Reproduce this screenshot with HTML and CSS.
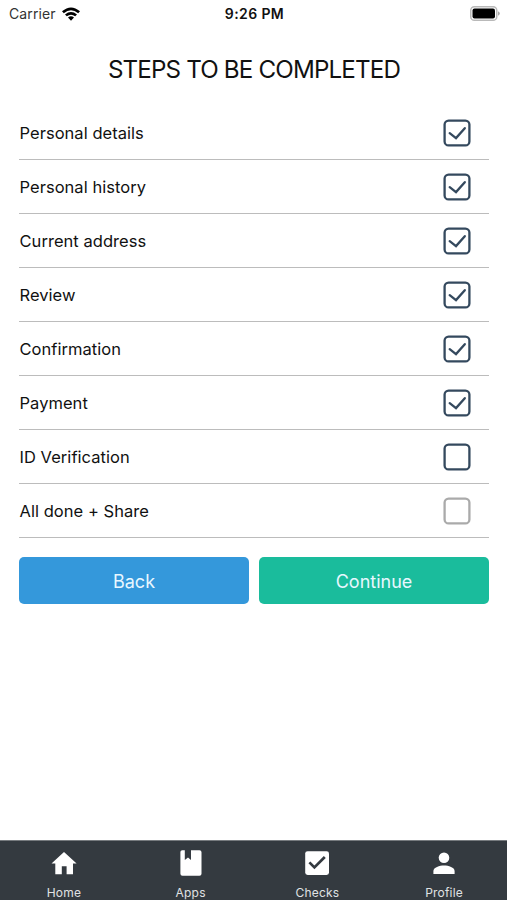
FILE: index.html
```html
<!DOCTYPE html>
<html lang="en">
<head>
<meta charset="utf-8">
<title>Steps to be completed</title>
<link rel="stylesheet" href="styles.css">
</head>
<body>
<div class="screen">
  <header class="status">
    <div class="carrier"><span>Carrier</span>
      <svg class="wifi" viewBox="0 0 18 14"><path d="M0 4.3Q9-3.5 18 4.3L16.2 6.3Q9 .2 1.8 6.3Z M3 7.4Q9 2.5 15 7.4L13.2 9.3Q9 6 4.8 9.3Z M6 10.4Q9 8 12 10.4L9 13.7Z"/></svg>
    </div>
    <span class="time">9:26 PM</span>
    <svg class="battery" viewBox="0 0 30 15"><rect x=".75" y=".75" width="26" height="13.5" rx="3.6" fill="#fff" stroke="#b9b9b9" stroke-width="1.5"/><rect x="2.5" y="2.5" width="22.5" height="10" rx="2" fill="#000"/><path d="M28 5.2q1.8.8 1.8 2.3T28 9.8z" fill="#aaa"/></svg>
  </header>
  <main>
    <h1><span>STEPS TO BE COMPLETED</span></h1>
    <ul class="steps">
      <li><span>Personal details</span><svg class="box" viewBox="0 0 28 28"><rect x="1.6" y="1.6" width="24.8" height="24.8" rx="4"/><path d="M6.7 14.2L13 19.1 21.8 9.2"/></svg></li>
      <li><span>Personal history</span><svg class="box" viewBox="0 0 28 28"><rect x="1.6" y="1.6" width="24.8" height="24.8" rx="4"/><path d="M6.7 14.2L13 19.1 21.8 9.2"/></svg></li>
      <li><span>Current address</span><svg class="box" viewBox="0 0 28 28"><rect x="1.6" y="1.6" width="24.8" height="24.8" rx="4"/><path d="M6.7 14.2L13 19.1 21.8 9.2"/></svg></li>
      <li><span>Review</span><svg class="box" viewBox="0 0 28 28"><rect x="1.6" y="1.6" width="24.8" height="24.8" rx="4"/><path d="M6.7 14.2L13 19.1 21.8 9.2"/></svg></li>
      <li><span>Confirmation</span><svg class="box" viewBox="0 0 28 28"><rect x="1.6" y="1.6" width="24.8" height="24.8" rx="4"/><path d="M6.7 14.2L13 19.1 21.8 9.2"/></svg></li>
      <li><span>Payment</span><svg class="box" viewBox="0 0 28 28"><rect x="1.6" y="1.6" width="24.8" height="24.8" rx="4"/><path d="M6.7 14.2L13 19.1 21.8 9.2"/></svg></li>
      <li><span>ID Verification</span><svg class="box" viewBox="0 0 28 28"><rect x="1.6" y="1.6" width="24.8" height="24.8" rx="4"/></svg></li>
      <li><span>All done + Share</span><svg class="box pending" viewBox="0 0 28 28"><rect x="1.6" y="1.6" width="24.8" height="24.8" rx="4"/></svg></li>
    </ul>
    <div class="actions">
      <button class="btn back">Back</button>
      <button class="btn continue">Continue</button>
    </div>
  </main>
  <nav class="tabs">
    <a><svg viewBox="0 0 28 28"><path d="M14 3L26.6 14.4H23V25.3H16.6V17.2H11.8V25.3H5.3V14.4H1.5Z"/></svg><span>Home</span></a>
    <a><svg viewBox="0 0 28 28"><path d="M5.2 1.2H7.8V11L11 8.6 14 11V1.2H22.5Q24.5 1.2 24.5 3.2V24.8Q24.5 26.8 22.5 26.8H5.4Q3.4 26.8 3.4 24.8V3Q3.4 1.2 5.2 1.2Z"/></svg><span>Apps</span></a>
    <a><svg viewBox="0 0 28 28"><rect x="2.2" y="2.2" width="23.8" height="23.8" rx="2.4"/><path class="tick" d="M6.4 13.4L11.4 18.4 21.8 8"/></svg><span>Checks</span></a>
    <a><svg viewBox="0 0 28 28"><circle cx="14" cy="8.7" r="5.3"/><path d="M3.4 25V22C3.4 18.5 9.5 16.6 14 16.6S24.6 18.5 24.6 22V25Z"/></svg><span>Profile</span></a>
  </nav>
</div>
</body>
</html>
```
FILE: styles.css
```css
* { box-sizing: border-box; }
body { margin: 0; background: #fff; color: #111; font-family: Inter, "Liberation Sans", sans-serif; }
.screen { height: 900px; display: flex; flex-direction: column; overflow: hidden; }
.status { height: 27px; padding: 0 7px 0 9px; display: grid; grid-template-columns: 1fr auto 1fr; align-items: center; font-size: 14px; }
.carrier { display: flex; align-items: center; gap: 6px; color: #333; letter-spacing: .12px; }
.wifi { width: 18px; height: 14px; fill: #000; }
.time { font-size: 14px; font-weight: 600; letter-spacing: .4px; }
.battery { width: 30px; height: 15px; justify-self: end; }
main { flex: 1; padding: 0 18px 0 19px; }
h1 { margin: 0; height: 79px; padding-top: 28px; font-size: 24.2px; line-height: 30px; font-weight: 400; text-align: center; letter-spacing: -.85px; }
.steps { list-style: none; margin: 0; padding: 0; }
.steps li { height: 54.06px; display: flex; align-items: center; justify-content: space-between; padding: 0 18px 0 .5px; border-bottom: 1px solid #bcbcbc; font-size: 16.5px; letter-spacing: .04px; }
.box { width: 28px; height: 28px; fill: none; stroke: #34495e; stroke-width: 2.3; stroke-linecap: round; }
.pending { stroke: #aaa; }
.actions { margin-top: 19px; display: flex; gap: 10px; }
.btn { flex: 1; height: 47px; padding: 1px 0 0; border: 0; border-radius: 5px; color: #e8f7ff; font: 400 18px Inter, sans-serif; }
.back { background: #3498db; }
.continue { background: #1abc9c; }
.tabs { height: 60px; display: grid; grid-template-columns: repeat(4, 1fr); background: #343a40; border-top: 1px solid #777b7f; }
.tabs a { display: flex; flex-direction: column; align-items: center; padding: 8px 0 0 1px; color: #e0e2e4; font-size: 12px; line-height: 15px; letter-spacing: .2px; }
.tabs svg { width: 28px; height: 28px; fill: #fff; margin-bottom: 8px; flex: none; }
.tabs .tick { fill: none; stroke: #343a40; stroke-width: 2.7; }
```
